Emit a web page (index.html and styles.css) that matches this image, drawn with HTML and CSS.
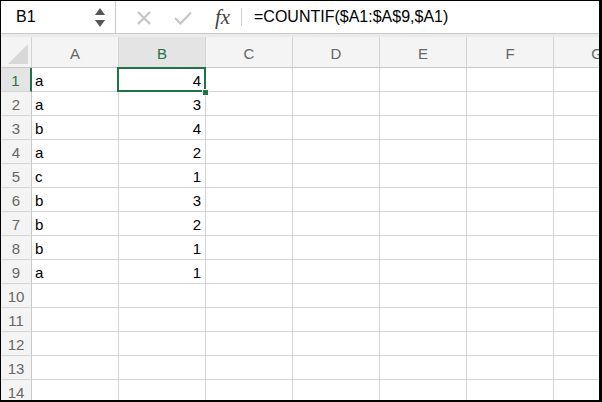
FILE: index.html
```html
<!DOCTYPE html>
<html>
<head>
<meta charset="utf-8">
<link rel="stylesheet" href="styles.css">
</head>
<body>
<div class="window">
  <div class="fbar">
    <div class="namebox">
      <span class="ref">B1</span>
      <span class="spin">
        <svg width="10" height="7" viewBox="0 0 10 7"><path d="M5 0 L10 7 L0 7 Z" fill="#555"/></svg>
        <svg width="10" height="7" viewBox="0 0 10 7"><path d="M0 0 L10 0 L5 7 Z" fill="#555"/></svg>
      </span>
    </div>
    <div class="fbtns">
      <svg class="ic-x" width="14" height="14" viewBox="0 0 14 14"><path d="M1 1 L13 13 M13 1 L1 13" stroke="#c4c4c4" stroke-width="2" fill="none"/></svg>
      <svg class="ic-ok" width="18" height="14" viewBox="0 0 18 14"><path d="M1 7 L6.5 12.5 L17 1.5" stroke="#c4c4c4" stroke-width="2" fill="none"/></svg>
      <span class="fx">fx</span>
      <span class="fsep"></span>
    </div>
    <div class="formula">=COUNTIF($A1:$A$9,$A1)</div>
  </div>
  <div class="gap"></div>
  <div class="sheet">
    <div class="corner"><span class="tri"></span></div>
    <div class="ch">A</div><div class="ch sel">B</div><div class="ch">C</div><div class="ch">D</div><div class="ch">E</div><div class="ch">F</div><div class="ch">G</div>

    <div class="rh sel">1</div><div class="c">a</div><div class="c n active">4<span class="handle"></span></div><div class="c"></div><div class="c"></div><div class="c"></div><div class="c"></div><div class="c"></div>
    <div class="rh">2</div><div class="c">a</div><div class="c n">3</div><div class="c"></div><div class="c"></div><div class="c"></div><div class="c"></div><div class="c"></div>
    <div class="rh">3</div><div class="c">b</div><div class="c n">4</div><div class="c"></div><div class="c"></div><div class="c"></div><div class="c"></div><div class="c"></div>
    <div class="rh">4</div><div class="c">a</div><div class="c n">2</div><div class="c"></div><div class="c"></div><div class="c"></div><div class="c"></div><div class="c"></div>
    <div class="rh">5</div><div class="c">c</div><div class="c n">1</div><div class="c"></div><div class="c"></div><div class="c"></div><div class="c"></div><div class="c"></div>
    <div class="rh">6</div><div class="c">b</div><div class="c n">3</div><div class="c"></div><div class="c"></div><div class="c"></div><div class="c"></div><div class="c"></div>
    <div class="rh">7</div><div class="c">b</div><div class="c n">2</div><div class="c"></div><div class="c"></div><div class="c"></div><div class="c"></div><div class="c"></div>
    <div class="rh">8</div><div class="c">b</div><div class="c n">1</div><div class="c"></div><div class="c"></div><div class="c"></div><div class="c"></div><div class="c"></div>
    <div class="rh">9</div><div class="c">a</div><div class="c n">1</div><div class="c"></div><div class="c"></div><div class="c"></div><div class="c"></div><div class="c"></div>
    <div class="rh">10</div><div class="c"></div><div class="c"></div><div class="c"></div><div class="c"></div><div class="c"></div><div class="c"></div><div class="c"></div>
    <div class="rh">11</div><div class="c"></div><div class="c"></div><div class="c"></div><div class="c"></div><div class="c"></div><div class="c"></div><div class="c"></div>
    <div class="rh">12</div><div class="c"></div><div class="c"></div><div class="c"></div><div class="c"></div><div class="c"></div><div class="c"></div><div class="c"></div>
    <div class="rh">13</div><div class="c"></div><div class="c"></div><div class="c"></div><div class="c"></div><div class="c"></div><div class="c"></div><div class="c"></div>
    <div class="rh">14</div><div class="c"></div><div class="c"></div><div class="c"></div><div class="c"></div><div class="c"></div><div class="c"></div><div class="c"></div>
  </div>
</div>
</body>
</html>
```

FILE: styles.css
```css
* { box-sizing: border-box; }
html, body { margin: 0; padding: 0; background: #fff; }
body { font-family: "Liberation Sans", Arial, sans-serif; }

.window {
  width: 602px;
  height: 402px;
  border-top: 1px solid #000;
  border-left: 1px solid #000;
  border-right: 3px solid #000;
  border-bottom: 2px solid #000;
  overflow: hidden;
  display: flex;
  flex-direction: column;
  background: #fff;
}

.fbar {
  height: 33px;
  flex: none;
  display: flex;
  align-items: stretch;
  border-bottom: 1px solid #c9c9c9;
  background: #fff;
}

.namebox {
  width: 115px;
  flex: none;
  display: flex;
  align-items: center;
  justify-content: space-between;
  padding: 0 10px 0 15px;
  border-right: 1px solid #c9c9c9;
}
.ref { font-size: 16px; color: #000; }
.spin { display: flex; flex-direction: column; gap: 5px; }
.spin svg { display: block; }

.fbtns {
  width: 138px;
  flex: none;
  display: flex;
  align-items: center;
  padding-left: 21px;
}
.ic-x { display: block; margin-top: 2px; }
.ic-ok { display: block; margin-left: 23px; margin-top: 2px; }
.fx {
  margin-left: 23px;
  font-family: "Liberation Serif", "Times New Roman", serif;
  font-style: italic;
  font-size: 21px;
  color: #444;
  line-height: 1;
}
.fsep {
  width: 1px;
  height: 18px;
  background: #d0d0d0;
  margin-left: 11px;
}

.formula {
  display: flex;
  align-items: center;
  font-size: 16px;
  color: #000;
}

.gap {
  height: 3px;
  flex: none;
  background: #ececec;
}

.sheet {
  display: grid;
  grid-template-columns: 31px repeat(7, 87px);
  grid-template-rows: 31px;
  grid-auto-rows: 24px;
  flex: none;
}

.corner {
  background: #f4f4f4;
  border-right: 1px solid #d3d3d3;
  border-bottom: 1px solid #c8c8c8;
  position: relative;
}
.tri {
  position: absolute;
  right: 3px;
  bottom: 3px;
  width: 0;
  height: 0;
  border-left: 20px solid transparent;
  border-bottom: 20px solid #d8d8d8;
}

.ch {
  background: #f4f4f4;
  border-right: 1px solid #d3d3d3;
  border-bottom: 1px solid #c8c8c8;
  display: flex;
  align-items: center;
  justify-content: center;
  font-size: 15px;
  color: #666;
  padding-top: 2px;
}
.ch.sel {
  background: #e4e4e4;
  color: #217346;
  border-bottom: 1px solid #217346;
}

.rh {
  background: #f4f4f4;
  border-right: 1px solid #c8c8c8;
  border-bottom: 1px solid #d3d3d3;
  display: flex;
  align-items: center;
  justify-content: center;
  font-size: 15px;
  color: #666;
  padding-top: 1px;
}
.rh.sel {
  background: #e4e4e4;
  color: #217346;
  border-right: 2px solid #217346;
}

.c {
  border-right: 1px solid #d4d4d4;
  border-bottom: 1px solid #d4d4d4;
  display: flex;
  align-items: center;
  font-size: 15px;
  color: #000;
  padding: 1px 3px 0;
}
.c.n { justify-content: flex-end; padding-right: 4px; }

.active { position: relative; }
.active::after {
  content: "";
  position: absolute;
  left: -2px;
  top: -1px;
  right: -1px;
  bottom: -1px;
  border: 2px solid #217346;
}
.handle {
  position: absolute;
  right: -4px;
  bottom: -5px;
  width: 7px;
  height: 7px;
  background: #217346;
  border: 1px solid #fff;
  z-index: 2;
}
```
